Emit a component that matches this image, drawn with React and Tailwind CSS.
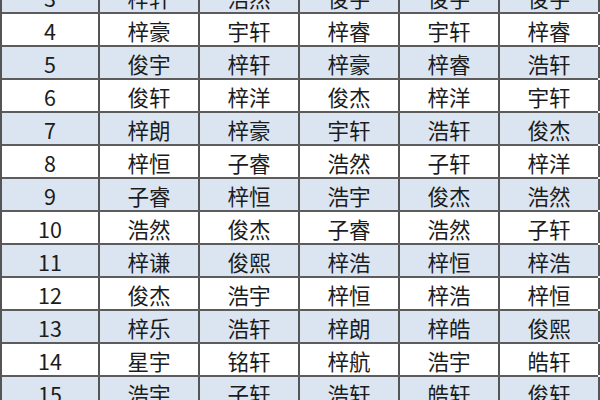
const rows = [
  ['3', '梓轩', '浩然', '俊宇', '俊宇', '俊宇'],
  ['4', '梓豪', '宇轩', '梓睿', '宇轩', '梓睿'],
  ['5', '俊宇', '梓轩', '梓豪', '梓睿', '浩轩'],
  ['6', '俊轩', '梓洋', '俊杰', '梓洋', '宇轩'],
  ['7', '梓朗', '梓豪', '宇轩', '浩轩', '俊杰'],
  ['8', '梓恒', '子睿', '浩然', '子轩', '梓洋'],
  ['9', '子睿', '梓恒', '浩宇', '俊杰', '浩然'],
  ['10', '浩然', '俊杰', '子睿', '浩然', '子轩'],
  ['11', '梓谦', '俊熙', '梓浩', '梓恒', '梓浩'],
  ['12', '俊杰', '浩宇', '梓恒', '梓浩', '梓恒'],
  ['13', '梓乐', '浩轩', '梓朗', '梓皓', '俊熙'],
  ['14', '星宇', '铭轩', '梓航', '浩宇', '皓轩'],
  ['15', '浩宇', '子轩', '浩轩', '皓轩', '俊轩'],
];

const App = () => {
  return (
    <div className="w-[600px] h-[400px] overflow-hidden bg-white">
      <div
        className="w-[598px] -mt-[19px] border-l-2 border-[#555]"
        style={{ fontFamily: '"Noto Sans CJK SC", "Noto Sans", sans-serif' }}
      >
        {rows.map((row, i) => (
          <div
            key={row[0]}
            className={`grid grid-cols-[98px_100px_100px_100px_100px_100px] h-[33px] border-b-2 border-[#5c5c5c] ${
              i % 2 === 0 ? 'bg-[#dbe5f1]' : 'bg-white'
            }`}
          >
            {row.map((cell, j) => (
              <div
                key={j}
                className="flex items-center justify-center border-r-2 border-[#555] text-[21.5px] text-[#1c1c1c] leading-none pt-[2px]"
              >
                {cell}
              </div>
            ))}
          </div>
        ))}
      </div>
    </div>
  );
};

export default App;
